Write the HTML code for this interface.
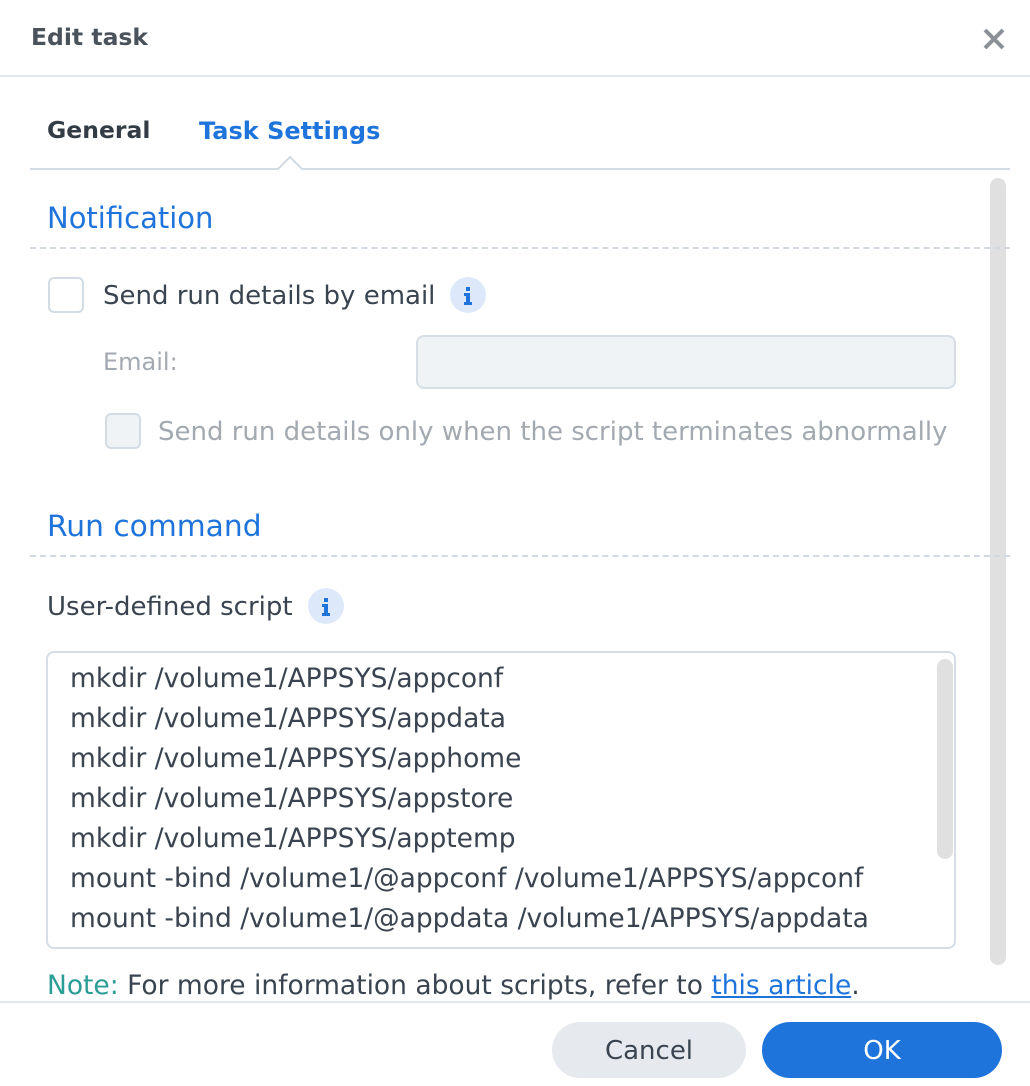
<!DOCTYPE html>
<html><head><meta charset="utf-8"><style>
*{box-sizing:border-box;margin:0;padding:0}
body{width:1030px;height:1086px;background:#fff;position:relative;overflow:hidden;font-family:"DejaVu Sans","Liberation Sans",sans-serif;color:#3a4450;font-size:26px}
.a{position:absolute;white-space:nowrap;line-height:1}
.blue{color:#1f74dc}
.gray{color:#a3a9b0}
.dash{position:absolute;left:30px;width:980px;height:0;border-top:2px dashed #d2d9e1}
.cb{position:absolute;width:36px;height:36px;border:2px solid #d3dbe4;border-radius:6px;background:#fff}
.info{position:absolute;width:36px;height:36px;border-radius:50%;background:#dde9fb}
</style></head><body>
<div class="a" style="left:31px;top:26px;font-size:23.5px;font-weight:bold;color:#4a525b">Edit task</div>
<svg class="a" style="left:983px;top:28px" width="22" height="22" viewBox="0 0 22 22"><path d="M2 2L20 20M20 2L2 20" stroke="#8b9096" stroke-width="4"/></svg>
<div style="position:absolute;left:0;top:75px;width:1030px;height:2px;background:#e2e7ee"></div>

<div class="a" style="left:47px;top:119px;font-size:23.5px;font-weight:bold;color:#333c45">General</div>
<div class="a blue" style="left:199px;top:119px;font-size:24px;font-weight:bold">Task Settings</div>
<svg class="a" style="left:30px;top:155px" width="980" height="17"><path d="M0 14H248L260 2L272 14H980" fill="none" stroke="#d2dae3" stroke-width="2"/></svg>

<div style="position:absolute;left:990px;top:178px;width:16px;height:787px;border-radius:8px;background:#e0e0e0"></div>

<div class="a blue" style="left:47px;top:204px;font-size:29px">Notification</div>
<div class="dash" style="top:247px"></div>
<div class="cb" style="left:48px;top:277px"></div>
<div class="a" style="left:103px;top:283px">Send run details by email</div>
<div class="info" style="left:450px;top:277px"><svg width="36" height="36"><rect x="16" y="10" width="4" height="4" fill="#1f74dc"/><path d="M14 16H20V25H22V28H14V25H16V19H14Z" fill="#1f74dc"/></svg></div>
<div class="a gray" style="left:103px;top:350px;font-size:24px">Email:</div>
<div style="position:absolute;left:416px;top:335px;width:540px;height:54px;border:2px solid #d6dde5;border-radius:8px;background:#f0f3f6"></div>
<div class="cb" style="left:105px;top:413px;background:#f0f3f6"></div>
<div class="a gray" style="left:158px;top:419px">Send run details only when the script terminates abnormally</div>

<div class="a blue" style="left:47px;top:512px;font-size:29.7px">Run command</div>
<div class="dash" style="top:555px"></div>
<div class="a" style="left:47px;top:594px;font-size:26px">User-defined script</div>
<div class="info" style="left:308px;top:588px"><svg width="36" height="36"><rect x="16" y="10" width="4" height="4" fill="#1f74dc"/><path d="M14 16H20V25H22V28H14V25H16V19H14Z" fill="#1f74dc"/></svg></div>

<div style="position:absolute;left:46px;top:651px;width:910px;height:298px;border:2px solid #d6dde5;border-radius:8px;background:#fff;overflow:hidden">
<div style="position:absolute;left:889px;top:6px;width:16px;height:200px;border-radius:8px;background:#e0e0e0"></div>
<div style="position:absolute;left:22px;top:6px;line-height:40px;white-space:pre;font-size:26.5px">mkdir /volume1/APPSYS/appconf
mkdir /volume1/APPSYS/appdata
mkdir /volume1/APPSYS/apphome
mkdir /volume1/APPSYS/appstore
mkdir /volume1/APPSYS/apptemp
mount -bind /volume1/@appconf /volume1/APPSYS/appconf
mount -bind /volume1/@appdata /volume1/APPSYS/appdata</div>
</div>

<div class="a" style="left:47px;top:973px;font-size:26.5px"><span style="color:#2a9d96">Note:</span> For more information about scripts, refer to <span style="color:#1f74dc;text-decoration:underline">this article</span>.</div>
<div style="position:absolute;left:0;top:1001px;width:1030px;height:2px;background:#e2e7ee"></div>
<div style="position:absolute;left:552px;top:1022px;width:194px;height:56px;border-radius:28px;background:#e6eaef;color:#3a4450;text-align:center;line-height:58px;font-size:26px">Cancel</div>
<div style="position:absolute;left:762px;top:1022px;width:240px;height:56px;border-radius:28px;background:#1f74dc;color:#fff;text-align:center;line-height:58px;font-size:26px">OK</div>
</body></html>
